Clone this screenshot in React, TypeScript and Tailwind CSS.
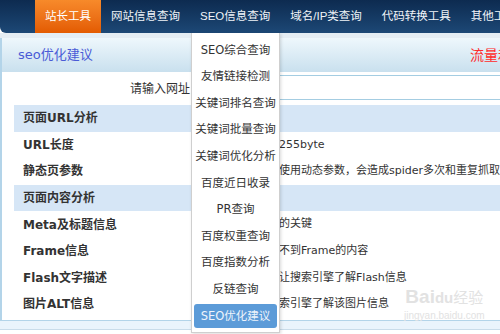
import React from 'react';

const navItems = ['站长工具', '网站信息查询', 'SEO信息查询', '域名/IP类查询', '代码转换工具', '其他工具'];

const menuItems = [
	'SEO综合查询',
	'友情链接检测',
	'关键词排名查询',
	'关键词批量查询',
	'关键词优化分析',
	'百度近日收录',
	'PR查询',
	'百度权重查询',
	'百度指数分析',
	'反链查询',
	'SEO优化建议',
];

type Row = { label: string; value?: string; group?: boolean };

const rows: Row[] = [
	{ label: '页面URL分析', group: true },
	{ label: 'URL长度', value: '网址长度为255byte' },
	{ label: '静态页参数', value: '该页面没有使用动态参数，会造成spider多次和重复抓取' },
	{ label: '页面内容分析', group: true },
	{ label: 'Meta及标题信息', value: '包含页面中的关键' },
	{ label: 'Frame信息', value: '搜索引擎抓不到Frame的内容' },
	{ label: 'Flash文字描述', value: '添加描述可让搜索引擎了解Flash信息' },
	{ label: '图片ALT信息', value: '有助于让搜索引擎了解该图片信息' },
];

const App = () => {
	return (
		<div className="relative h-[334px] w-[500px] overflow-hidden bg-white font-['DejaVu_Sans','Noto_Sans_CJK_SC',sans-serif] text-[12px] text-[#333]">
			{/* top nav */}
			<nav className="flex h-[33px] rounded-bl-[6px] bg-linear-to-b from-[#0d2b50] to-[#1d4876] pl-[35px] font-['Liberation_Sans','Noto_Sans_CJK_SC',sans-serif] text-[11.5px]">
				{navItems.map((item, i) => (
					<div
						key={item}
						className={
							i === 0
								? 'flex items-center whitespace-nowrap bg-linear-to-b from-[#f78a2a] to-[#e35b00] px-[10px] text-white'
								: 'flex items-center whitespace-nowrap px-[10px] text-[#f0f4f8]'
						}
					>
						{item}
					</div>
				))}
			</nav>
			<div className="h-[5px] bg-[#e4edf4]" />

			{/* main panel */}
			<div className="border-b border-l-2 border-[#b3d4e9] pb-[2px]">
				<div className="flex h-[34px] items-center bg-linear-to-b from-[#eef7fc] to-[#c9e0ee] pl-[16px]">
					<span className="text-[13px] text-[#4a5bd6]">seo优化建议</span>
					<div className="flex-1" />
					<div className="w-[30px] overflow-hidden whitespace-nowrap text-[14px] text-[#ff2a2a]">流量和排名</div>
				</div>
				<div className="flex h-[33px] items-start">
					<div className="w-[188px] pt-[8px] text-right">请输入网址</div>
					<div className="mt-[3px] ml-[8px] h-[25px] flex-1 border-y border-[#a4cde2]" />
				</div>
				<div className="ml-[12px]">
					{rows.map((r) => (
						<div
							key={r.label}
							className={r.group ? 'flex h-[26.6px] items-center bg-[#d6e6f6]' : 'flex h-[26.6px] items-center'}
						>
							<div className="w-[206px] pl-[9px] font-bold whitespace-nowrap">{r.label}</div>
							{r.value && <div className="pl-[4px] text-[11px] whitespace-nowrap">{r.value}</div>}
						</div>
					))}
				</div>
			</div>
			<div className="h-[9px] border-b border-[#c9dcea] bg-[#eaf4fc]" />

			{/* watermark */}
			<div className="pointer-events-none absolute top-[287px] left-[404px] flex flex-col items-center whitespace-nowrap leading-none text-[#e2e2e2]">
				<div className="font-['Liberation_Sans','Noto_Sans_CJK_SC',sans-serif] text-[19px] font-bold">
					Bai<span className="text-[15px]">du</span>
					<span className="text-[15px] font-normal">经验</span>
				</div>
				<div className="mt-[5px] font-['Liberation_Sans',sans-serif] text-[10px]">jingyan.baidu.com</div>
			</div>

			{/* dropdown menu */}
			<div className="absolute top-[33px] left-[191px] w-[89px] border border-t-0 border-[#cfcfcf] bg-white pt-[4px] pb-[2px] text-[11.5px] shadow-[1px_1px_3px_rgba(0,0,0,0.15)]">
				{menuItems.map((m, i) =>
					i === menuItems.length - 1 ? (
						<div key={m} className="flex h-[26.6px] items-center px-[2px]">
							<div className="flex h-[24px] w-full items-center justify-center rounded-[3px] bg-[#5c9bd8] whitespace-nowrap text-[#eef4fc]">
								{m}
							</div>
						</div>
					) : (
						<div key={m} className="flex h-[26.6px] items-center justify-center whitespace-nowrap">
							{m}
						</div>
					)
				)}
			</div>
		</div>
	);
};

export default App;
